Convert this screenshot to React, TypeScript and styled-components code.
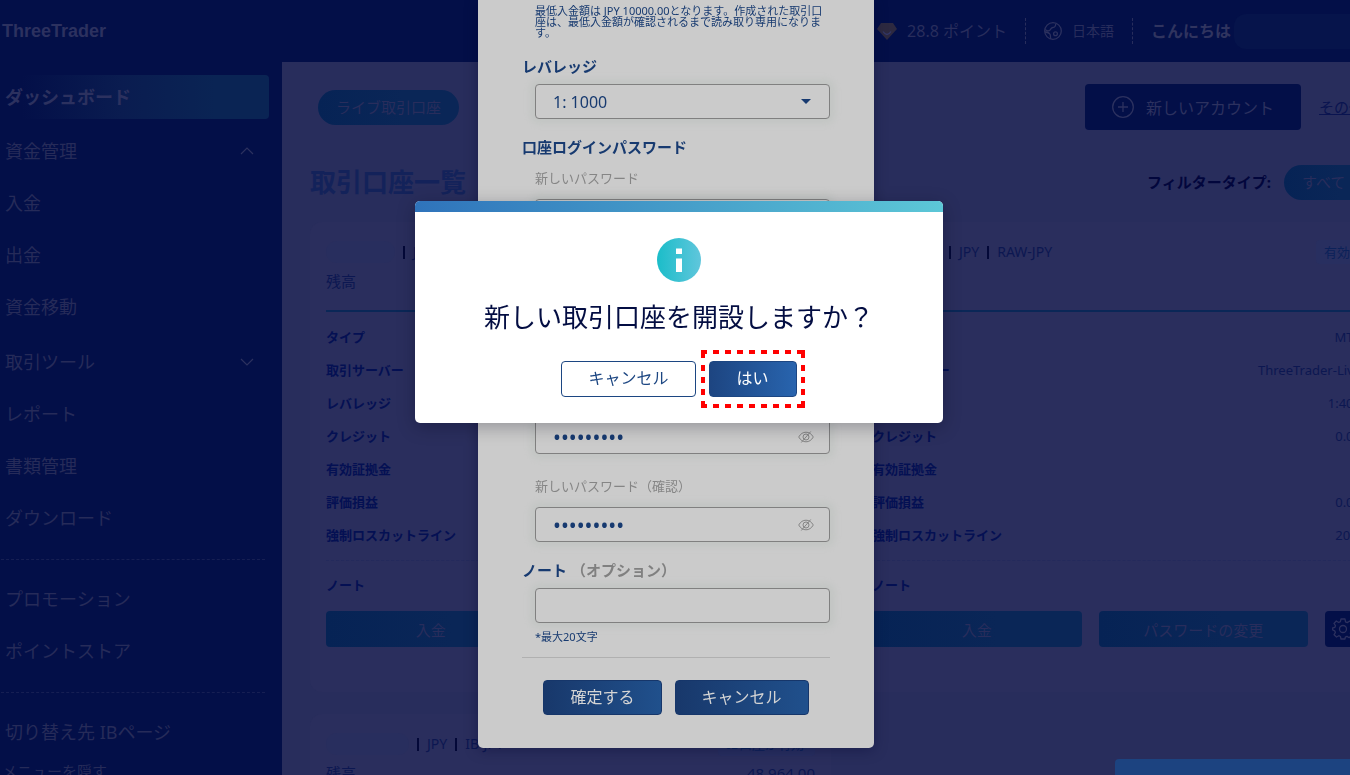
import React from "react";
import styled, { createGlobalStyle, css } from "styled-components";

const Global = createGlobalStyle`
  * { box-sizing: border-box; }
  html, body { margin: 0; overflow: hidden; background: #030f48; }
  body, button, input, select {
    font-family: "Noto Sans", "Noto Sans CJK JP", sans-serif;
  }
  button, input, select { margin: 0; }
`;

const navy = "#030f48";
const dim = "#282d5c";
const ink = "#041053";
const blue = "#173a70";

const Page = styled.div`
  height: 100vh;
  overflow: hidden;
  background: ${navy};
`;

const Wide = styled.div`
  width: calc(100% + 55px);
`;

const Header = styled.header`
  height: 62px;
  display: flex;
  align-items: center;
  justify-content: space-between;
  padding: 0 28px 0 2px;
  color: ${dim};
`;

const Logo = styled.a`
  font: 700 18px/24px "Liberation Sans", Arial, sans-serif;
  color: #2c315f;
  text-decoration: none;
`;

const HeaderItems = styled.div`
  display: flex;
  align-items: center;
  font-size: 16px;
  line-height: 20px;
  white-space: nowrap;
`;

const HeaderItem = styled.span<{ $gap?: number; $bold?: boolean; $small?: boolean }>`
  display: flex;
  align-items: center;
  gap: ${(p) => p.$gap ?? 10}px;
  font-size: ${(p) => (p.$small ? 14 : 16)}px;
  font-weight: ${(p) => (p.$bold ? 700 : 400)};
  color: ${(p) => (p.$bold ? "#30345f" : dim)};
`;

const HeaderRule = styled.span`
  height: 26px;
  margin: 0 18px;
  border-left: 1px dashed #282d5c;
`;

const Masked = styled.span<{ $w: number; $h: number; $header?: boolean }>`
  width: ${(p) => p.$w}px;
  height: ${(p) => p.$h}px;
  border-radius: 12px;
  background: ${(p) => (p.$header ? "#06144b" : "#282e5e")};
`;

const Body = styled.div`
  display: flex;
`;

const Sidebar = styled.nav`
  flex: none;
  width: 282px;
  padding: 13px 13px 0 0;
`;

const NavLink = styled.a<{ $active?: boolean; $gap?: number; $small?: boolean }>`
  display: flex;
  align-items: center;
  justify-content: space-between;
  height: ${(p) => (p.$active ? 44 : p.$small ? 26 : 52)}px;
  margin-top: ${(p) => p.$gap ?? 0}px;
  padding: 0 15px 0 ${(p) => (p.$small ? 2 : 5)}px;
  font-size: ${(p) => (p.$small ? 15 : 18)}px;
  line-height: 26px;
  color: #262b59;
  text-decoration: none;
  border-radius: 4px;
  ${(p) =>
    p.$active &&
    css`
      font-weight: 700;
      color: #2c315f;
      background: linear-gradient(90deg, #030f48 8%, #0a1c50 45%, #0a2454 80%);
    `}
`;

const NavRule = styled.hr`
  margin: 15px 4px 13px 1px;
  border: 0;
  border-top: 1px dashed #161f53;
`;

const Main = styled.main`
  flex: 1;
  min-width: 0;
  height: 100vh;
  padding: 22px 28px 0;
  background: ${dim};
`;

const Bar = styled.div<{ $inset?: number; $top?: number }>`
  display: flex;
  align-items: center;
  justify-content: space-between;
  height: 46px;
  margin-top: ${(p) => p.$top ?? 0}px;
  padding-left: ${(p) => p.$inset ?? 0}px;
`;

const Right = styled.div`
  display: flex;
  align-items: center;
`;

const pill = css`
  height: 35px;
  border: 0;
  border-radius: 18px;
  line-height: 20px;
  color: ${dim};
  background: linear-gradient(90deg, #062355, #0a2657 60%);
`;

const Pill = styled.button`
  ${pill}
  padding: 0 18px;
  font-size: 15px;
`;

const PillSelect = styled.select`
  ${pill}
  width: 93px;
  padding: 0 0 0 18px;
  font-size: 15px;
  appearance: none;
`;

const NewAccount = styled.button`
  display: flex;
  align-items: center;
  gap: 12px;
  height: 46px;
  padding: 0 27px;
  border: 0;
  border-radius: 4px;
  font-size: 16px;
  color: #2c315f;
  background: ${navy};
`;

const MoreLink = styled.a`
  width: 58px;
  margin-left: 18px;
  font-size: 15px;
  line-height: 20px;
  color: #0a1450;
`;

const Title = styled.h1`
  margin: 0;
  font-size: 26px;
  line-height: 36px;
  color: #13225a;
`;

const FilterLabel = styled.label`
  margin-right: 13px;
  font-size: 15px;
  font-weight: 700;
  line-height: 20px;
  color: #02063c;
`;

const Cards = styled.div`
  display: grid;
  grid-template-columns: 1fr 1fr;
  gap: 22px 25px;
  margin-top: 17px;
`;

const Card = styled.section`
  min-width: 0;
  height: 470px;
  padding: 12px 16px 0;
  border-radius: 12px;
  background: #2a2e5d;
`;

const CardHead = styled.div`
  display: flex;
  align-items: center;
  height: 36px;
  font-size: 14px;
  line-height: 20px;
  color: #0c1751;
`;

const Sep = styled.span`
  width: 2px;
  height: 13px;
  margin: 0 8px;
  background: #030838;
`;

const Status = styled.span`
  margin-left: auto;
  padding: 2px 11px 2px 8px;
  border-radius: 4px;
  font-size: 13px;
  color: #0b2159;
  background: #282f60;
`;

const Balance = styled.div`
  display: flex;
  justify-content: space-between;
  align-items: center;
  height: 40px;
  padding-bottom: 18px;
  font-size: 15px;
  line-height: 20px;
  color: #0c1751;
  white-space: nowrap;
`;

const Details = styled.dl`
  margin: 0;
  padding: 8px 0 9px;
  border-top: 2px solid #0a2757;
  border-bottom: 1px dashed #242a5c;
`;

const Row = styled.div`
  display: flex;
  align-items: center;
  justify-content: space-between;
  height: 33px;
  font-size: 13px;
  line-height: 20px;
  color: #0c1751;
  dt { font-weight: 700; color: ${ink}; }
  dd { margin: 0; }
`;

const CardNote = styled.div`
  padding: 14px 0 16px;
  font-size: 13px;
  font-weight: 700;
  line-height: 20px;
  color: ${ink};
`;

const Actions = styled.div`
  display: flex;
  gap: 17px;
`;

const Action = styled.button`
  flex: 1;
  height: 36px;
  border: 0;
  border-radius: 4px;
  font-size: 15px;
  color: ${dim};
  background: linear-gradient(90deg, #062355, #0a2657 60%);
`;

const Gear = styled.button`
  display: grid;
  place-items: center;
  width: 36px;
  height: 36px;
  padding: 0;
  border: 0;
  border-radius: 4px;
  color: #2c315f;
  background: ${navy};
`;

const Layer = styled.div<{ $center?: boolean }>`
  position: fixed;
  inset: 0;
  display: flex;
  justify-content: center;
  align-items: flex-start;
  padding: ${(p) => (p.$center ? "201px 0 0 8px" : "0 0 0 2px")};
`;

const FormPanel = styled.form`
  width: 396px;
  padding: 5px 44px 33px;
  border-radius: 0 0 5px 5px;
  background: #cbcbcb;
  color: ${blue};
  box-shadow: 0 2px 14px rgba(2, 5, 45, 0.35);
`;

const Hint = styled.p<{ $gap?: number }>`
  margin: ${(p) => p.$gap ?? 0}px 0 0 13px;
  font-size: 11px;
  line-height: 11px;
`;

const Heading = styled.h2`
  display: block;
  margin: 18px 0 0;
  font-size: 15px;
  line-height: 20px;
  font-weight: 700;
  span { margin-left: 4px; color: #808080; }
`;

const Label = styled.label<{ $first?: boolean }>`
  display: block;
  margin: ${(p) => (p.$first ? 13 : 24)}px 0 0 13px;
  font-size: 13px;
  line-height: 16px;
  color: #858585;
`;

const Field = styled.div<{ $gap?: number }>`
  display: flex;
  align-items: center;
  height: 35px;
  margin: ${(p) => p.$gap ?? 13}px 0 0 13px;
  padding-right: 15px;
  border: 1px solid #808080;
  border-radius: 4px;
  background: #cbcbcb;
  box-shadow: 0 0 6px 5px #c3c6c4;
`;

const control = css`
  flex: 1;
  min-width: 0;
  height: 33px;
  padding: 0 0 0 17px;
  border: 0;
  outline: 0;
  appearance: none;
  background: transparent;
  color: ${blue};
`;

const Input = styled.input`
  ${control}
  font-size: ${(p) => (p.type === "password" ? 21 : 16)}px;
`;

const Select = styled.select`
  ${control}
  font-size: 16px;
`;

const IconButton = styled.button`
  display: grid;
  padding: 0;
  border: 0;
  background: none;
  color: #858585;
`;

const FormRule = styled.hr`
  margin: 15px 0 22px;
  border: 0;
  border-top: 1px solid #b0b0b0;
`;

const Buttons = styled.div`
  display: flex;
  justify-content: center;
  gap: 13px;
`;

const Button = styled.button<{ $kind: "muted" | "primary" | "outline" }>`
  height: ${(p) => (p.$kind === "muted" ? 35 : 36)}px;
  padding: 0 ${(p) => (p.$kind === "primary" ? 27 : 26)}px 2px;
  border: 1px solid ${(p) => (p.$kind === "muted" ? "#16366a" : "#1c4682")};
  border-radius: 4px;
  font-size: 16px;
  line-height: 20px;
  color: ${(p) => (p.$kind === "muted" ? "#d4d4d4" : p.$kind === "primary" ? "#ffffff" : "#1c4682")};
  background: ${(p) =>
    p.$kind === "muted"
      ? "linear-gradient(90deg, #18386b, #20508c)"
      : p.$kind === "primary"
        ? "linear-gradient(90deg, #1d4581, #2864ae)"
        : "#ffffff"};
`;

const Dialog = styled.div`
  width: 528px;
  border-radius: 5px;
  padding-bottom: 26px;
  background: #ffffff;
  box-shadow: 0 4px 18px rgba(0, 0, 20, 0.28);
  text-align: center;
`;

const InfoIcon = styled.svg`
  display: block;
  margin: 0 auto;
`;

const Stripe = styled.div`
  height: 11px;
  margin-bottom: 26px;
  border-radius: 5px 5px 0 0;
  background: linear-gradient(90deg, #2f73bb, #5cc7d7);
`;

const DialogTitle = styled.h2`
  margin: 17px 0 26px;
  font-size: 26px;
  line-height: 36px;
  font-weight: 400;
  color: #030d42;
`;

const Marked = styled.div`
  position: relative;
  display: flex;
`;

const Marker = styled.svg`
  position: absolute;
  left: -8px;
  top: -11px;
  pointer-events: none;
`;

const Toast = styled.div`
  position: fixed;
  right: 0;
  bottom: 0;
  width: 235px;
  height: 16px;
  border-radius: 4px 0 0 0;
  background: #1c4380;
`;

const Chevron = ({ up }: { up?: boolean }) => (
  <svg width="14" height="8" viewBox="0 0 14 8" fill="none" stroke="#2c315f" strokeWidth="1.2">
    <path d={up ? "M1 7l6-6 6 6" : "M1 1l6 6 6-6"} />
  </svg>
);

const Gem = () => (
  <svg width="20" height="17" viewBox="0 0 20 17">
    <path d="M4 0h12l4 6-10 11L0 6z" fill="#2d2940" />
    <path d="M6 8.500q4 6 8 0" fill="none" stroke="#34386a" strokeWidth="1.300" />
  </svg>
);

const Globe = () => (
  <svg width="18" height="18" viewBox="0 0 18 18" fill="none" stroke="#2c315f" strokeWidth="1.300">
    <circle cx="9" cy="9" r="8.300" />
    <path d="M1.200 7.500c2.500 2 4 1.500 5 .3s1-2.300 2.800-2.300 2.500-1 2.800-3.800M1 10c2.500.2 4.300.8 5 2.300s.2 2.700.8 4.600" />
    <circle cx="11.500" cy="11.800" r="1.900" />
  </svg>
);

const Eye = () => (
  <svg width="16" height="12" viewBox="0 0 16 12" fill="none" stroke="currentColor" strokeWidth="1">
    <path d="M.7 6C2.500 2.800 5 1.200 8 1.200s5.500 1.600 7.300 4.800C13.500 9.200 11 10.800 8 10.800S2.500 9.200.7 6z" />
    <circle cx="8" cy="6" r="3" />
    <path d="M3.300 11.500L12.700.5" />
  </svg>
);

const GearIcon = () => (
  <svg width="22" height="22" viewBox="0 0 22 22" fill="none" stroke="currentColor" strokeWidth="1.300" strokeLinejoin="round">
    <circle cx="11" cy="11" r="3.500" />
    <path d="M9 1h4l.5 2.800 1.800.8L17.700 3l2.300 2.600-1.500 2.400.6 1.700 2.200.5v2.600l-2.300.7-.7 1.700 1.300 2.200-2.400 2.300-2.200-1.300-1.700.8L13 21H9l-.6-2.500-1.600-.8L4.500 19l-2.400-2.300 1.300-2.200-.7-1.700L.7 12V9.800l2.200-.5.6-1.600L2 5.500 4.300 3l2.400 1.500 1.700-.8z" />
  </svg>
);

const details: [string, string][] = [
  ["タイプ", "MT5"],
  ["取引サーバー", "ThreeTrader-Live"],
  ["レバレッジ", "1:400"],
  ["クレジット", "0.00"],
  ["有効証拠金", ""],
  ["評価損益", "0.00"],
  ["強制ロスカットライン", "20%"],
];

type AccountProps = { kind: string; masked: number; balance?: string; status?: string };

const Account = ({ kind, masked, balance, status = "有効" }: AccountProps) => (
  <Card>
    <CardHead>
      <Masked $w={masked} $h={22} />
      <Sep />JPY<Sep />{kind}
      <Status>{status}</Status>
    </CardHead>
    <Balance><span>残高</span><span>{balance}</span></Balance>
    <Details>
      {details.map(([name, value]) => (
        <Row key={name}><dt>{name}</dt><dd>{value}</dd></Row>
      ))}
    </Details>
    <CardNote>ノート</CardNote>
    <Actions>
      <Action type="button">入金</Action>
      <Action type="button">パスワードの変更</Action>
      <Gear type="button" aria-label="設定"><GearIcon /></Gear>
    </Actions>
  </Card>
);

const Password = ({ id, label, first }: { id: string; label: string; first?: boolean }) => (
  <>
    <Label htmlFor={id} $first={first}>{label}</Label>
    <Field>
      <Input id={id} type="password" defaultValue="Trader#10" />
      <IconButton type="button" aria-label="表示"><Eye /></IconButton>
    </Field>
  </>
);

export default function App() {
  return (
    <>
      <Global />
      <Page>
        <Wide>
          <Header>
            <Logo href="#">ThreeTrader</Logo>
            <HeaderItems>
              <HeaderItem><Gem />28.8 ポイント</HeaderItem>
              <HeaderRule />
              <HeaderItem $small><Globe />日本語</HeaderItem>
              <HeaderRule />
              <HeaderItem $bold $gap={3}>こんにちは<Masked $w={143} $h={35} $header /></HeaderItem>
            </HeaderItems>
          </Header>
          <Body>
            <Sidebar>
              <NavLink href="#" $active>ダッシュボード</NavLink>
              <NavLink href="#" $gap={6}>資金管理<Chevron up /></NavLink>
              <NavLink href="#">入金</NavLink>
              <NavLink href="#">出金</NavLink>
              <NavLink href="#">資金移動</NavLink>
              <NavLink href="#" $gap={3}>取引ツール<Chevron /></NavLink>
              <NavLink href="#">レポート</NavLink>
              <NavLink href="#">書類管理</NavLink>
              <NavLink href="#">ダウンロード</NavLink>
              <NavRule />
              <NavLink href="#">プロモーション</NavLink>
              <NavLink href="#">ポイントストア</NavLink>
              <NavRule />
              <NavLink href="#">切り替え先 IBページ</NavLink>
              <NavLink href="#" $small>メニューを隠す</NavLink>
            </Sidebar>
            <Main>
              <Bar $inset={8}>
                <Pill type="button">ライブ取引口座</Pill>
                <Right>
                  <NewAccount type="button">
                    <svg width="22" height="22" viewBox="0 0 22 22" fill="none" stroke="currentColor" strokeWidth="1.300">
                      <circle cx="11" cy="11" r="10.300" />
                      <path d="M11 6v10M6 11h10" />
                    </svg>
                    新しいアカウント
                  </NewAccount>
                  <MoreLink href="#">その他</MoreLink>
                </Right>
              </Bar>
              <Bar $top={29}>
                <Title>取引口座一覧</Title>
                <Right>
                  <FilterLabel htmlFor="filter">フィルタータイプ:</FilterLabel>
                  <PillSelect id="filter"><option>すべて</option></PillSelect>
                </Right>
              </Bar>
              <Cards>
                <Account kind="RAW-JPY" masked={69} />
                <Account kind="RAW-JPY" masked={69} />
                <Account kind="IB-JPY" masked={83} balance="48,964.00" status="IB口座が有効" />
              </Cards>
            </Main>
          </Body>
        </Wide>
      </Page>

      <Layer>
        <FormPanel onSubmit={(e) => e.preventDefault()}>
          <Hint>最低入金額は JPY 10000.00となります。作成された取引口座は、最低入金額が確認されるまで読み取り専用になります。</Hint>
          <Heading as="label" htmlFor="leverage">レバレッジ</Heading>
          <Field $gap={8}>
            <Select id="leverage"><option>1: 1000</option></Select>
            <svg width="16" height="5" viewBox="0 0 16 5"><path d="M3 0h10L8 5z" fill={blue} /></svg>
          </Field>
          <Heading>口座ログインパスワード</Heading>
          <Password id="login" label="新しいパスワード" first />
          <Password id="login2" label="新しいパスワード（確認）" />
          <Hint $gap={6}>&nbsp;</Hint>
          <Heading>読み取り専用パスワード</Heading>
          <Password id="view" label="新しいパスワード" first />
          <Password id="view2" label="新しいパスワード（確認）" />
          <Heading as="label" htmlFor="note">ノート<span>（オプション）</span></Heading>
          <Field $gap={8}><Input id="note" type="text" maxLength={20} /></Field>
          <Hint $gap={8}>*最大20文字</Hint>
          <FormRule />
          <Buttons>
            <Button $kind="muted" type="submit">確定する</Button>
            <Button $kind="muted" type="button">キャンセル</Button>
          </Buttons>
        </FormPanel>
      </Layer>

      <Layer $center>
        <Dialog role="dialog" aria-labelledby="confirm-title">
          <Stripe />
          <InfoIcon width="44" height="44" viewBox="0 0 44 44">
            <defs>
              <linearGradient id="info"><stop stopColor="#1bbdc9" /><stop offset="1" stopColor="#60c6dc" /></linearGradient>
            </defs>
            <circle cx="22" cy="22" r="22" fill="url(#info)" />
            <path d="M19 10.500h6v5.500h-6zM19 20.500h6v13.500h-6z" fill="#fff" />
          </InfoIcon>
          <DialogTitle id="confirm-title">新しい取引口座を開設しますか？</DialogTitle>
          <Buttons>
            <Button $kind="outline" type="button">キャンセル</Button>
            <Marked>
              <Button $kind="primary" type="button">はい</Button>
              <Marker width="104" height="58" viewBox="0 0 104 58" fill="none" stroke="#f00" strokeWidth="4">
                <path d="M0 2h104M0 56h104" strokeDasharray="6 6 6 6 6 6 6 6 6 6 6 6 6 6 6 6 8 0" />
                <path d="M2 0v58M102 0v58" strokeDasharray="8 7 6 6 6 6 6 6 7 0" />
              </Marker>
            </Marked>
          </Buttons>
        </Dialog>
      </Layer>
      <Toast />
    </>
  );
}
